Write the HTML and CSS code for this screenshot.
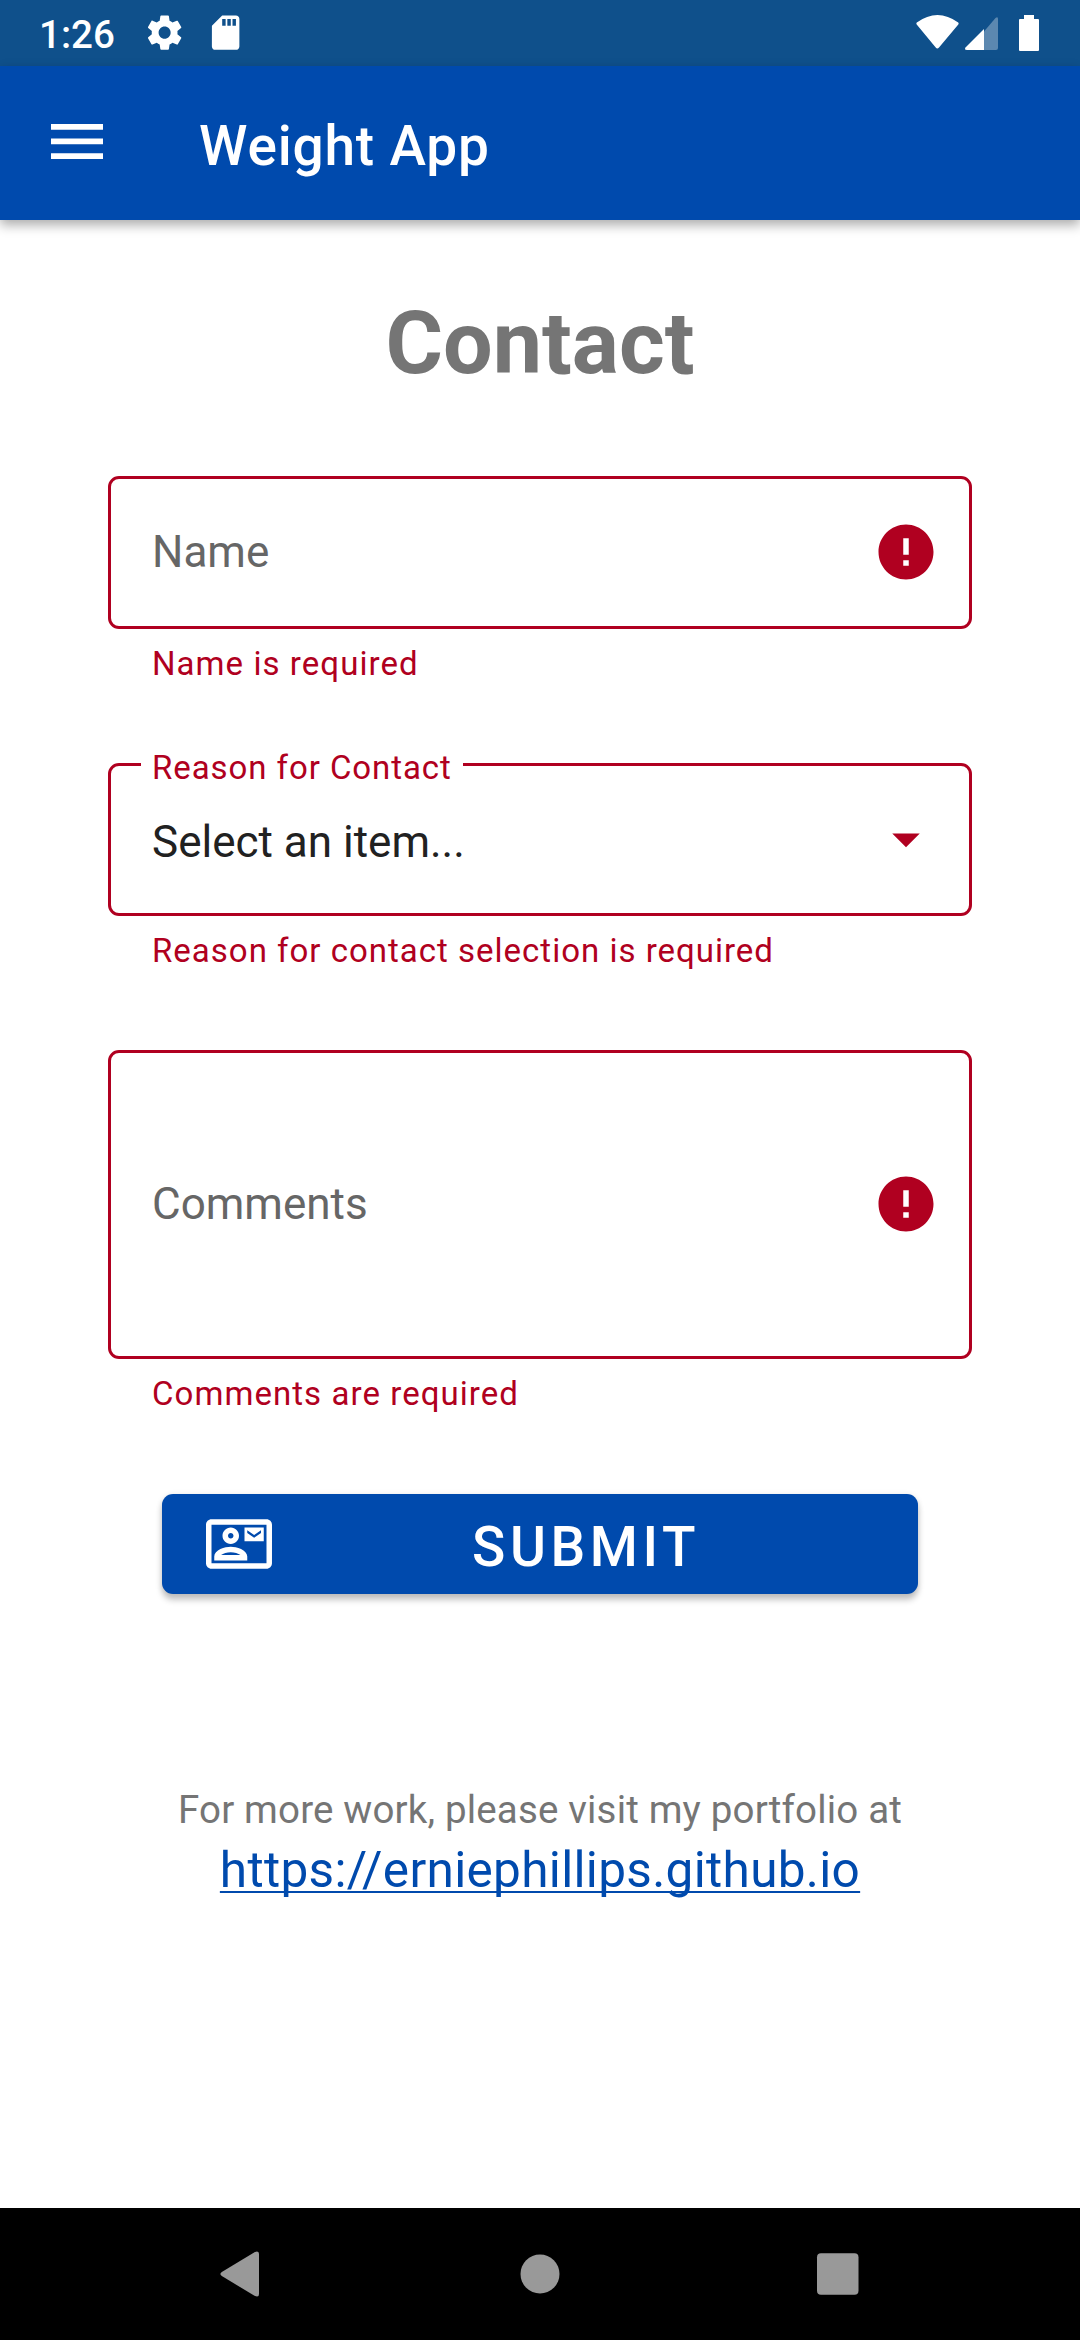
FILE: index.html
```html
<!DOCTYPE html>
<html lang="en">
<head>
<meta charset="utf-8">
<title>Weight App</title>
<link rel="stylesheet" href="styles.css">
</head>
<body>
<header class="status-bar">
  <span class="clock">1:26</span>
  <svg class="status-icon gear" viewBox="0 0 24 24"><path d="M19.43 12.98c.04-.32.07-.64.07-.98s-.03-.66-.07-.98l2.11-1.65c.19-.15.24-.42.12-.64l-2-3.46c-.12-.22-.39-.3-.61-.22l-2.49 1c-.52-.4-1.08-.73-1.69-.98l-.38-2.65C14.46 2.18 14.25 2 14 2h-4c-.25 0-.46.18-.49.42l-.38 2.65c-.61.25-1.17.59-1.69.98l-2.49-1c-.23-.09-.49 0-.61.22l-2 3.46c-.13.22-.07.49.12.64l2.11 1.65c-.04.32-.07.65-.07.98s.03.66.07.98l-2.11 1.65c-.19.15-.24.42-.12.64l2 3.46c.12.22.39.3.61.22l2.49-1c.52.4 1.08.73 1.69.98l.38 2.65c.03.24.24.42.49.42h4c.25 0 .46-.18.49-.42l.38-2.65c.61-.25 1.17-.59 1.69-.98l2.49 1c.23.09.49 0 .61-.22l2-3.46c.12-.22.07-.49-.12-.64l-2.11-1.65zM12 15.5c-1.93 0-3.5-1.57-3.5-3.5s1.57-3.5 3.5-3.5 3.5 1.57 3.5 3.5-1.57 3.5-3.5 3.5z"/></svg>
  <svg class="status-icon sd" viewBox="0 0 24 24"><path d="M18 2h-8L4.02 8 4 20c0 1.1.9 2 2 2h12c1.1 0 2-.9 2-2V4c0-1.1-.9-2-2-2zm-6 6h-2V4h2v4zm3 0h-2V4h2v4zm3 0h-2V4h2v4z"/></svg>
  <svg class="signals" viewBox="0 0 124 36">
    <path d="M.8 7.500Q21.500-7.500 42.200 7.500Q43 8.300 42.300 9.500L23 32.500Q21.300 34.500 19.700 32.500L.7 9.500Q0 8.300.8 7.500Z"/>
    <path fill-opacity=".32" d="M68 16.500 79.500 3Q82 1 82 4V33Q82 35 80 35H68Z"/>
    <path d="M68 14V35H51Q48 35 49.500 32.500Z"/>
    <path d="M108 0h10v4h4q1 0 1 1v30q0 1-1 1h-18q-1 0-1-1V5q0-1 1-1h4Z"/>
  </svg>
</header>
<div class="app-bar">
  <svg class="menu" viewBox="0 0 52 35"><path d="M0 0h52v5.700H0zM0 14.600h52v5.700H0zM0 29.300h52V35H0z"/></svg>
  <span class="app-title">Weight App</span>
</div>
<main class="page">
  <h1 class="heading">Contact</h1>
  <form class="form">
    <div class="field">
      <div class="box"><span class="hint">Name</span>
        <svg class="end-icon" viewBox="0 0 24 24"><path d="M12 2C6.480 2 2 6.480 2 12s4.480 10 10 10 10-4.480 10-10S17.520 2 12 2zm1 15h-2v-2h2v2zm0-4h-2V7h2v6z"/></svg>
      </div>
      <p class="error">Name is required</p>
    </div>
    <div class="field">
      <div class="box select"><span class="label">Reason for Contact</span><span class="value">Select an item...</span>
        <svg class="end-icon" viewBox="0 0 24 24"><path d="M7 10l5 5 5-5z"/></svg>
      </div>
      <p class="error wide">Reason for contact selection is required</p>
    </div>
    <div class="field">
      <div class="box tall"><span class="hint">Comments</span>
        <svg class="end-icon" viewBox="0 0 24 24"><path d="M12 2C6.480 2 2 6.480 2 12s4.480 10 10 10 10-4.480 10-10S17.520 2 12 2zm1 15h-2v-2h2v2zm0-4h-2V7h2v6z"/></svg>
      </div>
      <p class="error">Comments are required</p>
    </div>
    <button class="submit" type="button">
      <svg class="mail" viewBox="0 0 24 24"><path d="M22 3H2C.9 3 0 3.900 0 5v14c0 1.100.9 2 2 2h20c1.100 0 1.990-.9 1.990-2L24 5c0-1.100-.9-2-2-2zm0 16H2V5h20v14zM21 6h-7v5h7V6zm-1 2l-2.500 1.750L15 8V7l2.500 1.750L20 7v1zM9 12c1.650 0 3-1.350 3-3s-1.350-3-3-3-3 1.350-3 3 1.350 3 3 3zm0-4c.55 0 1 .45 1 1s-.45 1-1 1-1-.45-1-1 .45-1 1-1zm6 8.590c0-2.500-3.970-3.580-6-3.580s-6 1.080-6 3.580V18h12v-1.410zM5.480 16c.74-.5 2.220-1 3.520-1s2.770.49 3.520 1H5.480z"/></svg>
      <span class="submit-text">SUBMIT</span>
    </button>
  </form>
  <p class="more">For more work, please visit my portfolio at</p>
  <a class="link">https://erniephillips.github.io</a>
</main>
<nav class="nav-bar">
  <svg class="nav-icon" viewBox="0 0 48 48"><path d="M2.800 22 35.500 2.200Q40 0 40 4V44Q40 48 35.500 45.800L2.800 26Q0 24 2.800 22Z"/></svg>
  <svg class="nav-icon" viewBox="0 0 48 48"><circle cx="24" cy="24" r="19.500"/></svg>
  <svg class="nav-icon" viewBox="0 0 48 48"><rect x="4" y="3.300" width="41.500" height="41.500" rx="4"/></svg>
</nav>
</body>
</html>
```
FILE: styles.css
```css
* { box-sizing: border-box; }
body {
  margin: 0;
  width: 1080px;
  height: 2340px;
  display: flex;
  flex-direction: column;
  background: #fff;
  font-family: Roboto, sans-serif;
  overflow: hidden;
}
p, h1 { margin: 0; }
svg { display: block; flex: none; }
.status-bar {
  height: 66px;
  display: flex;
  align-items: center;
  padding: 0 40px 0 39px;
  background: #0f508b;
  color: #fff;
  fill: #fff;
}
.clock { width: 105px; font-size: 38.500px; font-weight: 500; line-height: 46px; padding-top: 3px; }
.status-icon { width: 41.250px; height: 41.250px; }
.sd { margin-left: 19.500px; }
.signals { width: 124px; height: 36px; margin-left: auto; }
.app-bar {
  position: relative;
  height: 154px;
  display: flex;
  align-items: center;
  padding-left: 51px;
  background: #004aad;
  color: #fff;
  fill: #fff;
  box-shadow: 0 5px 11px rgba(0, 0, 0, .33);
}
.menu { width: 52px; height: 35px; margin-bottom: 3px; }
.app-title { margin-left: 96px; padding-top: 6px; font-size: 55px; font-weight: 500; line-height: 64px; letter-spacing: .8px; }
.page { flex: 1; display: flex; flex-direction: column; align-items: center; padding-top: 71px; }
.heading { font-size: 88px; font-weight: 700; line-height: 104px; color: #757575; }
.form { width: 864px; margin-top: 81px; display: flex; flex-direction: column; align-items: center; }
.field { width: 100%; height: 208px; margin-bottom: 79px; }
.field:nth-child(3) { height: 364px; margin-bottom: 80px; }
.box {
  position: relative;
  height: 153px;
  display: flex;
  align-items: center;
  justify-content: space-between;
  padding: 0 30px 1px 41px;
  border: 3px solid #b00020;
  border-radius: 11px;
  font-size: 44px;
  line-height: 52px;
}
.tall { height: 309px; }
.hint { color: #666; }
.value { color: #212121; padding-top: 6px; }
.end-icon { width: 66px; height: 66px; fill: #b00020; }
.label {
  position: absolute;
  left: 30px;
  top: -18px;
  width: 322px;
  padding-left: 11px;
  background: #fff;
  color: #b00020;
  font-size: 33px;
  line-height: 40px;
  letter-spacing: .93px;
  white-space: nowrap;
}
.error { margin: 15px 0 0 44px; font-size: 33px; line-height: 40px; letter-spacing: 1.060px; color: #b00020; }
.wide { letter-spacing: 1px; }
.submit {
  width: 756px;
  height: 100px;
  display: flex;
  align-items: center;
  padding: 0 44px;
  border: 0;
  border-radius: 11px;
  background: #004aad;
  color: #fff;
  fill: #fff;
  font-family: inherit;
  box-shadow: 0 6px 6px rgba(0, 0, 0, .22), 0 1px 6px rgba(0, 0, 0, .1);
}
.mail { width: 66px; height: 66px; }
.submit-text { flex: 1; text-align: center; padding: 6px 0 0 26px; font-size: 55px; font-weight: 500; line-height: 64px; letter-spacing: 4.600px; }
.more { margin-top: 193px; font-size: 38.500px; line-height: 46px; letter-spacing: .17px; color: #757575; }
.link {
  margin-top: 8px;
  font-size: 49.500px;
  line-height: 58px;
  letter-spacing: .32px;
  color: #004aad;
  text-decoration: underline;
  text-decoration-thickness: 2px;
  text-decoration-skip-ink: none;
  text-underline-offset: 4px;
}
.nav-bar {
  height: 132px;
  display: grid;
  grid-template-columns: 48px 48px 48px;
  justify-content: center;
  column-gap: 249px;
  align-items: center;
  background: #000;
  fill: #999;
}
```
